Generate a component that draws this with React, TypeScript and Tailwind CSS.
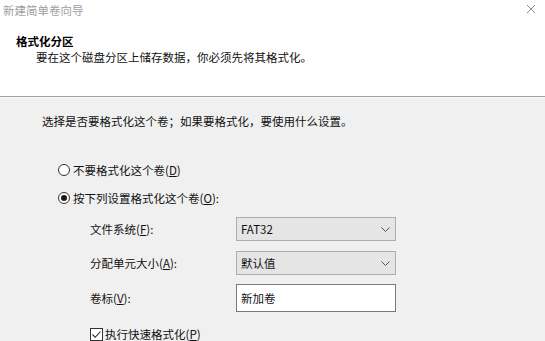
import React from "react";

const font = { fontFamily: '"Noto Sans CJK SC", "Noto Sans", sans-serif' };

function Radio({ checked }: { checked?: boolean }) {
  return (
    <span className="w-[12px] h-[12px] rounded-full border border-[#333333] bg-white flex items-center justify-center shrink-0">
      {checked && <span className="w-[6px] h-[6px] rounded-full bg-[#1a1a1a]" />}
    </span>
  );
}

function Chevron() {
  return (
    <svg width="9" height="5" viewBox="0 0 9 5" className="shrink-0">
      <path d="M0.5 0.5 L4.5 4.5 L8.5 0.5" fill="none" stroke="#555" strokeWidth="1" />
    </svg>
  );
}

function Select({ value }: { value: string }) {
  return (
    <div className="w-[160px] h-[24px] bg-[#e5e5e5] border border-[#adadad] flex items-center justify-between pl-[4px] pr-[5px]">
      <span className="text-[11.5px] leading-[14px] text-[#111]">{value}</span>
      <Chevron />
    </div>
  );
}

export default function App() {
  return (
    <div className="w-[545px] h-[341px] overflow-hidden bg-[#f0f0f0] flex flex-col text-[#111]" style={font}>
      <div className="h-[96px] bg-white relative shrink-0 flex flex-col">
        <div className="pt-[3px] pl-[3px] text-[11.5px] leading-[14px] text-[#a0a0a0]">新建简单卷向导</div>
        <svg width="10" height="10" viewBox="0 0 10 10" className="absolute left-[526px] top-[4px]">
          <path d="M1 1 L9 9 M9 1 L1 9" stroke="#8a8a8a" strokeWidth="1" />
        </svg>
        <div className="mt-[17px] pl-[16px] text-[11.5px] leading-[14px] font-bold text-black">格式化分区</div>
        <div className="mt-[2px] pl-[36px] text-[11.5px] leading-[14px]">要在这个磁盘分区上储存数据，你必须先将其格式化。</div>
      </div>
      <div className="h-[1px] bg-[#a0a0a0] shrink-0" />
      <div className="h-[1px] bg-[#f8f8f8] shrink-0" />
      <div className="flex flex-col pl-[42px] pt-[16px] text-[11.5px] leading-[14px]">
        <div>选择是否要格式化这个卷；如果要格式化，要使用什么设置。</div>
        <div className="mt-[35px] ml-[16px] flex items-center gap-[3px]">
          <Radio />
          <span>不要格式化这个卷(<span className="underline">D</span>)</span>
        </div>
        <div className="mt-[14px] ml-[16px] flex items-center gap-[3px]">
          <Radio checked />
          <span>按下列设置格式化这个卷(<span className="underline">O</span>):</span>
        </div>
        <div className="ml-[48px] flex flex-col">
          <div className="mt-[12px] flex items-center">
            <span className="w-[146px]">文件系统(<span className="underline">F</span>):</span>
            <Select value="FAT32" />
          </div>
          <div className="mt-[10px] flex items-center">
            <span className="w-[146px]">分配单元大小(<span className="underline">A</span>):</span>
            <Select value="默认值" />
          </div>
          <div className="mt-[9px] flex items-center">
            <span className="w-[146px]">卷标(<span className="underline">V</span>):</span>
            <div className="w-[160px] h-[28px] bg-white border border-[#7a7a7a] flex items-center pl-[4px]">
              新加卷
            </div>
          </div>
          <div className="mt-[15px] flex items-center gap-[2px]">
            <span className="w-[13px] h-[13px] border border-[#333] bg-white flex items-center justify-center shrink-0">
              <svg width="11" height="11" viewBox="0 0 11 11">
                <path d="M1.5 5.5 L4.2 8.3 L9.5 2.5" fill="none" stroke="#222" strokeWidth="1.1" />
              </svg>
            </span>
            <span>执行快速格式化(<span className="underline">P</span>)</span>
          </div>
        </div>
      </div>
    </div>
  );
}
